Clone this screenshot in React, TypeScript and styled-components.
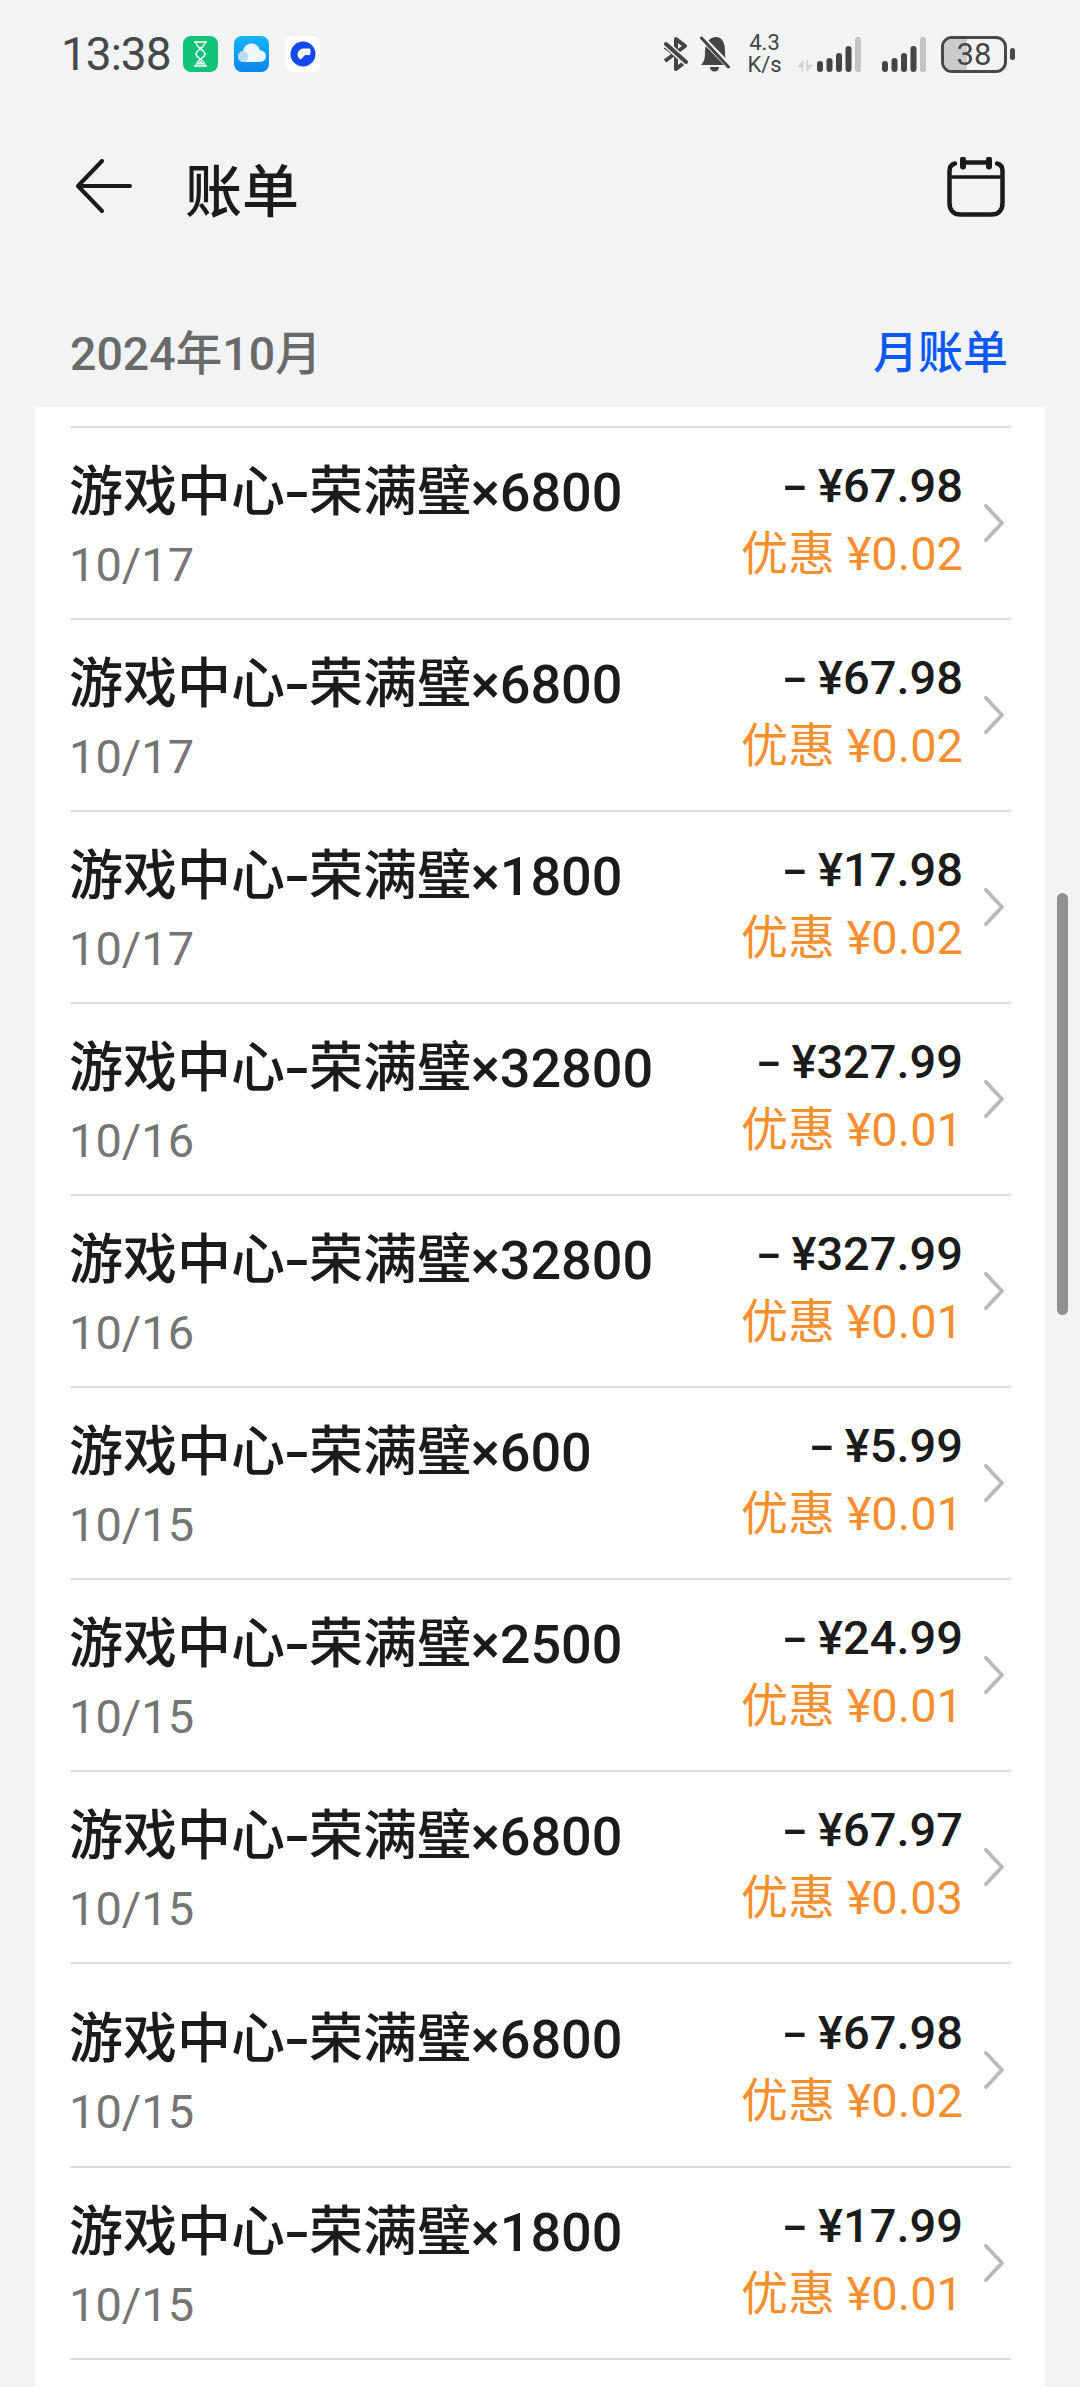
import React from "react";
import styled, { createGlobalStyle } from "styled-components";

const sans = `Roboto, "Noto Sans CJK SC", sans-serif`;

const GlobalStyle = createGlobalStyle`
  html, body {
    margin: 0;
    padding: 0;
    background: #f1f3f5;
  }
  * {
    box-sizing: border-box;
  }
`;

type Bill = {
  name: string;
  date: string;
  price: string;
  discount: string;
  tall?: boolean;
};

const bills: Bill[] = [
  { name: "×6800", date: "10/17", price: "67.98", discount: "0.02" },
  { name: "×6800", date: "10/17", price: "67.98", discount: "0.02" },
  { name: "×1800", date: "10/17", price: "17.98", discount: "0.02" },
  { name: "×32800", date: "10/16", price: "327.99", discount: "0.01" },
  { name: "×32800", date: "10/16", price: "327.99", discount: "0.01" },
  { name: "×600", date: "10/15", price: "5.99", discount: "0.01" },
  { name: "×2500", date: "10/15", price: "24.99", discount: "0.01" },
  { name: "×6800", date: "10/15", price: "67.97", discount: "0.03" },
  { name: "×6800", date: "10/15", price: "67.98", discount: "0.02", tall: true },
  { name: "×1800", date: "10/15", price: "17.99", discount: "0.01" },
];

const HourglassIcon = () => (
  <svg width="35" height="36" viewBox="0 0 35 36">
    <rect width="35" height="36" rx="8" fill="#12c377" />
    <path d="M11 6h13M11 30h13M13 6c0 6 9 8 9 12s-9 6-9 12M22 6c0 6-9 8-9 12s9 6 9 12" fill="none" stroke="#fff" strokeWidth="1.500" />
    <path d="M15 11h5l-2.500 3.500z M13.500 28.500l4-3.500 4 3.500z" fill="#fff" />
  </svg>
);

const CloudIcon = () => (
  <svg width="35" height="36" viewBox="0 0 35 36">
    <defs>
      <linearGradient id="cloudBg" x1="0" y1="0" x2="0" y2="1">
        <stop offset="0" stopColor="#14b4fb" />
        <stop offset="1" stopColor="#0a85f0" />
      </linearGradient>
    </defs>
    <rect width="35" height="36" rx="8" fill="url(#cloudBg)" />
    <path d="M10 26c-3.500 0-6-2.500-6-5.500s2-5 5-5.500c1-5 4.500-7.500 8.500-7.500 4.500 0 7.500 3 8.500 7 3.500 0 6 2.500 6 5.500s-2.500 6-6 6z" fill="#eef7fd" />
    <path d="M10 26c-3.500 0-6-2.500-6-5.500s2.500-5.500 5.500-5.500c3 0 4.500 2.500 4.500 5.500s-1 5.500-4 5.500z" fill="#bcdcf2" />
  </svg>
);

const BrowserIcon = () => (
  <svg width="35" height="36" viewBox="0 0 35 36">
    <rect width="35" height="36" rx="8" fill="#fff" />
    <circle cx="18" cy="18" r="12.500" fill="#1248ee" />
    <path d="M12.500 19c0-4 3-6.500 6.500-6.500h6c.8 2 .8 4.500 0 6.500h-5l-4 4.500c-2-.8-3.500-2.300-3.500-4.500z" fill="#fff" />
  </svg>
);

const BluetoothIcon = () => (
  <svg width="25" height="36" viewBox="0 0 25 36">
    <path d="M2 11 22 26 13 33V3l9 7L2 25" fill="none" stroke="#444" strokeWidth="4" strokeLinejoin="round" />
    <path d="M2 7 24 27" stroke="#f1f3f5" strokeWidth="7" />
    <path d="M3 8 23 26" stroke="#444" strokeWidth="4" strokeLinecap="round" />
  </svg>
);

const BellOffIcon = () => (
  <svg width="30" height="36" viewBox="0 0 30 36">
    <path d="M1 29c3-3 4-6 4-13C5 7 10 1 16 1s9 6 9 14c0 7 1 11 4 14z" fill="#444" />
    <path d="M10 31h9c0 3-2 4.500-4.500 4.500S10 34 10 31z" fill="#444" />
    <path d="M0 0 30 31" stroke="#f1f3f5" strokeWidth="6" />
    <path d="M1.500 2 28.500 31" stroke="#444" strokeWidth="3" strokeLinecap="round" />
  </svg>
);

const ArrowsIcon = () => (
  <svg width="15" height="12" viewBox="0 0 15 12">
    <path d="M4.500 12V2L1 6.500h3M9 0v10l5-4.500h-4" fill="#cfd1d3" stroke="#cfd1d3" strokeWidth="1.500" />
  </svg>
);

const SignalIcon = () => (
  <svg width="44" height="35" viewBox="0 0 44 35">
    <rect x="0" y="24" width="6" height="11" rx="3" fill="#444" />
    <rect x="9.500" y="21" width="6" height="14" rx="3" fill="#444" />
    <rect x="19" y="16" width="6" height="19" rx="3" fill="#444" />
    <rect x="28.500" y="9" width="6" height="26" rx="3" fill="#444" />
    <rect x="38" y="0" width="6" height="35" rx="2" fill="#c4c4c4" />
  </svg>
);

const BackArrow = () => (
  <svg width="58" height="56" viewBox="0 0 58 56">
    <path d="M27 2 3 27l24 25M4 27h51" fill="none" stroke="#1b1b1b" strokeWidth="4" strokeLinecap="round" strokeLinejoin="round" />
  </svg>
);

const CalendarIcon = () => (
  <svg width="58" height="60" viewBox="0 0 58 60">
    <path d="M8 6.500C4 7.500 2.500 10 2.500 14v32c0 7 4 11.500 11 11.500h31c7 0 11-4.500 11-11.500V14c0-4-1.500-6.500-5.500-7.500M16 5.500h26" fill="none" stroke="#1b1b1b" strokeWidth="4.500" strokeLinecap="round" />
    <path d="M2.500 20h53" stroke="#1b1b1b" strokeWidth="3.500" />
    <path d="M16 2.500v7M42 2.500v7" stroke="#1b1b1b" strokeWidth="6" strokeLinecap="round" />
  </svg>
);

const Chevron = () => (
  <svg width="20" height="38" viewBox="0 0 20 38">
    <path d="M2 2 18 19 2 36" fill="none" stroke="#b9b9b9" strokeWidth="3.800" strokeLinecap="round" strokeLinejoin="round" />
  </svg>
);

const App = () => {
  return (
    <Page>
      <GlobalStyle />
      <StatusBar>
        <StatusLeft>
          <Clock>13:38</Clock>
          <NoticeIcons>
            <HourglassIcon />
            <CloudIcon />
            <BrowserIcon />
          </NoticeIcons>
        </StatusLeft>
        <StatusRight>
          <BluetoothIcon />
          <BellBox>
            <BellOffIcon />
          </BellBox>
          <Speed>
            <span>4.3</span>
            <span>K/s</span>
          </Speed>
          <SignalGroup>
            <ArrowsIcon />
            <SignalIcon />
          </SignalGroup>
          <SignalIcon />
          <Battery>
            <BatteryFill />
            <BatteryText>38</BatteryText>
          </Battery>
          <BatteryCap />
        </StatusRight>
      </StatusBar>
      <TitleBar>
        <TitleLeft>
          <BackArrow />
          <Title>账单</Title>
        </TitleLeft>
        <CalendarIcon />
      </TitleBar>
      <MonthRow>
        <Month>2024年10月</Month>
        <MonthLink>月账单</MonthLink>
      </MonthRow>
      <Card>
        <List>
          {bills.map((bill, i) => (
            <Row key={i} $tall={bill.tall}>
              <Info>
                <Name>
                  游戏中心<NameDash>-</NameDash>荣满璧{bill.name}
                </Name>
                <DateText>{bill.date}</DateText>
              </Info>
              <Amounts>
                <Price>
                  <PriceDash>-</PriceDash> ¥{bill.price}
                </Price>
                <Discount>优惠 ¥{bill.discount}</Discount>
              </Amounts>
              <ChevronBox>
                <Chevron />
              </ChevronBox>
            </Row>
          ))}
        </List>
      </Card>
      <ScrollThumb />
    </Page>
  );
};

export default App;

const Page = styled.div`
  position: relative;
  width: 1080px;
  height: 2387px;
  overflow: hidden;
  background: #f1f3f5;
  font-family: ${sans};
`;

const StatusBar = styled.div`
  height: 108px;
  padding: 36px 65px 0 61px;
  display: flex;
  justify-content: space-between;
  align-items: flex-start;
`;

const StatusLeft = styled.div`
  display: flex;
  align-items: center;
  height: 36px;
`;

const Clock = styled.span`
  font-size: 46px;
  line-height: 36px;
  letter-spacing: -1px;
  color: #474747;
`;

const NoticeIcons = styled.div`
  display: flex;
  gap: 16px;
  margin-left: 12px;
`;

const StatusRight = styled.div`
  display: flex;
  align-items: center;
  height: 36px;
`;

const BellBox = styled.div`
  display: flex;
  margin-left: 12px;
`;

const Speed = styled.div`
  display: flex;
  flex-direction: column;
  align-items: center;
  width: 35px;
  margin-left: 17px;
  font-size: 22px;
  line-height: 22px;
  color: #444;
`;

const SignalGroup = styled.div`
  display: flex;
  align-items: flex-end;
  gap: 4px;
  height: 35px;
  margin-left: 16px;
  margin-right: 21px;
`;

const Battery = styled.div`
  position: relative;
  width: 66px;
  height: 37px;
  margin-left: 15px;
  border: 3px solid #474747;
  border-radius: 11px;
  overflow: hidden;
  display: flex;
  align-items: center;
  justify-content: center;
`;

const BatteryFill = styled.div`
  position: absolute;
  top: 0;
  bottom: 0;
  left: 0;
  width: 38%;
  background: #cbcbcb;
`;

const BatteryText = styled.span`
  position: relative;
  font-size: 31px;
  line-height: 31px;
  color: #444;
`;

const BatteryCap = styled.div`
  width: 5px;
  height: 12px;
  margin-left: 3px;
  border-radius: 2.500px;
  background: #474747;
`;

const TitleBar = styled.div`
  height: 104px;
  padding: 53px 75px 0 75px;
  display: flex;
  justify-content: space-between;
  align-items: center;
`;

const TitleLeft = styled.div`
  display: flex;
  align-items: center;
`;

const Title = styled.h1`
  margin: 0 0 0 52px;
  font-size: 57px;
  font-weight: 500;
  color: #1b1b1b;
`;

const MonthRow = styled.div`
  height: 195px;
  padding: 80px 72px 0 70px;
  display: flex;
  justify-content: space-between;
  align-items: center;
`;

const Month = styled.div`
  font-size: 46.500px;
  font-weight: 500;
  color: #6a6a6a;
`;

const MonthLink = styled.div`
  font-size: 45px;
  font-weight: 500;
  color: #0a59f7;
`;

const Card = styled.div`
  width: 1010px;
  height: 2000px;
  margin-left: 35px;
  padding: 19px 34px 0 35px;
  background: #fff;
`;

const List = styled.div`
  border-top: 2px solid #dcdcdc;
`;

const Row = styled.div<{ $tall?: boolean }>`
  height: ${(p) => (p.$tall ? "204px" : "192px")};
  padding-top: ${(p) => (p.$tall ? "10px" : "0")};
  border-bottom: 2px solid #dcdcdc;
  display: flex;
  align-items: center;
`;

const Info = styled.div`
  flex: 1;
  min-width: 0;
  margin-left: -1px;
  padding-top: 3px;
`;

const Name = styled.div`
  font-size: 54px;
  line-height: 66px;
  font-weight: 500;
  color: #1b1b1b;
`;

const NameDash = styled.span`
  display: inline-block;
  width: 24px;
  text-align: center;
  transform: scaleX(1.4);
`;

const DateText = styled.div`
  margin-top: 14px;
  font-size: 47px;
  line-height: 50px;
  color: #757575;
`;

const Amounts = styled.div`
  padding-bottom: 6px;
  text-align: right;
`;

const Price = styled.div`
  font-size: 47px;
  line-height: 60px;
  font-weight: 500;
  color: #1b1b1b;
`;

const PriceDash = styled.span`
  display: inline-block;
  width: 18px;
  margin-right: 2px;
  text-align: center;
  transform: scaleX(1.6);
`;

const Discount = styled.div`
  margin-top: 8px;
  font-size: 47px;
  line-height: 60px;
  color: #f48f30;
`;

const ChevronBox = styled.div`
  width: 48px;
  display: flex;
  justify-content: flex-end;
  padding-right: 7px;
`;

const ScrollThumb = styled.div`
  position: absolute;
  left: 1057px;
  top: 893px;
  width: 11px;
  height: 422px;
  border-radius: 6px;
  background: #919191;
`;
